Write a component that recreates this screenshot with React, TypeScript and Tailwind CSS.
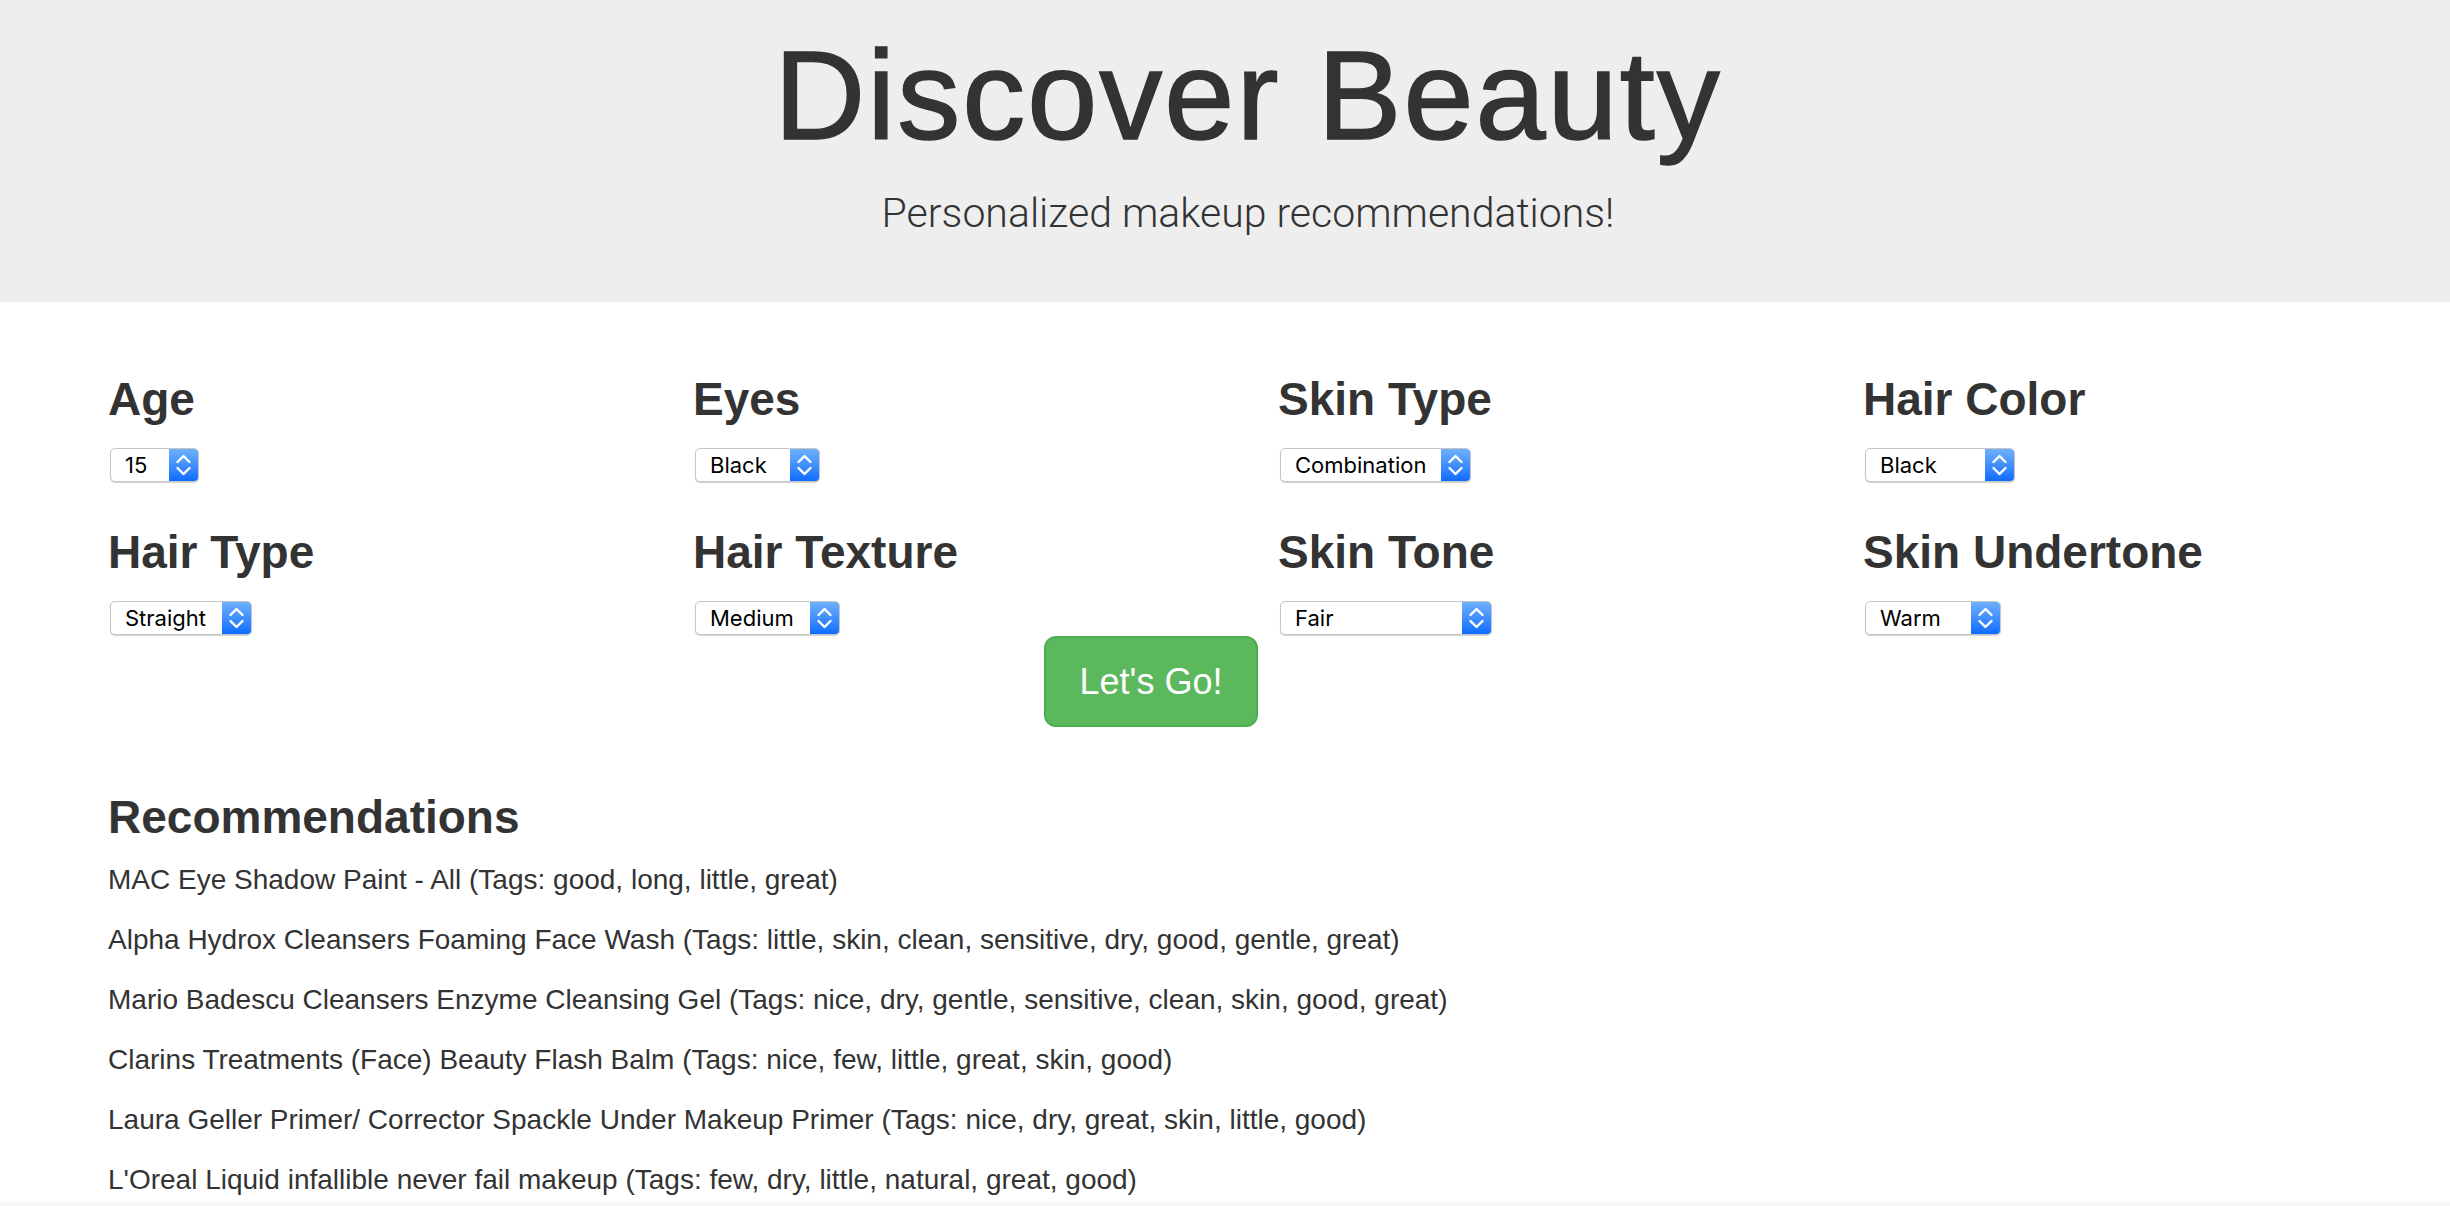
import React from "react";

type Field = { label: string; value: string; width: number };

const row1: Field[] = [
  { label: "Age", value: "15", width: 89 },
  { label: "Eyes", value: "Black", width: 125 },
  { label: "Skin Type", value: "Combination", width: 191 },
  { label: "Hair Color", value: "Black", width: 150 },
];

const row2: Field[] = [
  { label: "Hair Type", value: "Straight", width: 142 },
  { label: "Hair Texture", value: "Medium", width: 145 },
  { label: "Skin Tone", value: "Fair", width: 212 },
  { label: "Skin Undertone", value: "Warm", width: 136 },
];

const recs = [
  "MAC Eye Shadow Paint - All (Tags: good, long, little, great)",
  "Alpha Hydrox Cleansers Foaming Face Wash (Tags: little, skin, clean, sensitive, dry, good, gentle, great)",
  "Mario Badescu Cleansers Enzyme Cleansing Gel (Tags: nice, dry, gentle, sensitive, clean, skin, good, great)",
  "Clarins Treatments (Face) Beauty Flash Balm (Tags: nice, few, little, great, skin, good)",
  "Laura Geller Primer/ Corrector Spackle Under Makeup Primer (Tags: nice, dry, great, skin, little, good)",
  "L'Oreal Liquid infallible never fail makeup (Tags: few, dry, little, natural, great, good)",
];

function MacSelect({ value, width }: { value: string; width: number }) {
  return (
    <div
      className="ml-[2px] flex h-[34px] overflow-hidden rounded-[5px] border border-[#c6c6c6] bg-white shadow-[0_1px_1px_rgba(0,0,0,0.18)]"
      style={{ width }}
    >
      <span className="flex flex-1 items-center pl-[14px] font-['Inter',sans-serif] text-[22px] leading-none text-black">
        {value}
      </span>
      <span className="flex w-[29px] items-center justify-center bg-linear-to-b from-[#6db0fb] to-[#0a6bff]">
        <svg width="29" height="34" viewBox="0 0 29 34" fill="none">
          <path
            d="M8.5 14 L14.5 8 L20.5 14"
            stroke="white"
            strokeWidth="2.4"
            strokeLinecap="round"
            strokeLinejoin="round"
          />
          <path
            d="M8.5 20 L14.5 26 L20.5 20"
            stroke="white"
            strokeWidth="2.4"
            strokeLinecap="round"
            strokeLinejoin="round"
          />
        </svg>
      </span>
    </div>
  );
}

function FieldCell({ f }: { f: Field }) {
  return (
    <div className="flex flex-col items-start">
      <h3 className="text-[46px] font-bold leading-[53px] text-[#333]">{f.label}</h3>
      <div className="mt-[22px]">
        <MacSelect value={f.value} width={f.width} />
      </div>
    </div>
  );
}

export default function App() {
  return (
    <div className="relative min-h-[1206px] w-[2450px] overflow-hidden bg-white font-['Liberation_Sans',Arial,sans-serif] text-[#333]">
      <header className="flex h-[302px] flex-col items-center bg-[#eeeeee] pl-[46px]">
        <h1 className="mt-[27px] text-[126px] font-normal leading-[138px] tracking-[2px] [-webkit-text-stroke:1.6px_#333]">
          Discover Beauty
        </h1>
        <p className="mt-[18px] font-['Roboto',sans-serif] text-[41px] font-light leading-[60px]">
          Personalized makeup recommendations!
        </p>
      </header>

      <main className="pl-[108px] pt-[71px]">
        <div className="grid grid-cols-[repeat(4,585px)] gap-y-[44px]">
          {row1.map((f) => (
            <FieldCell key={f.label} f={f} />
          ))}
          {row2.map((f) => (
            <FieldCell key={f.label} f={f} />
          ))}
        </div>

        <div className="mt-[1px] flex pl-[936px]">
          <button className="h-[91px] w-[214px] rounded-[12px] border-2 border-[#4cae4c] bg-[#5cb85c] text-[36px] leading-none text-white">
            Let's Go!
          </button>
        </div>

        <h3 className="mt-[64px] text-[46px] font-bold leading-[53px] text-[#333]">
          Recommendations
        </h3>
        <div className="mt-[16px]">
          {recs.map((r) => (
            <p key={r} className="mb-[20px] text-[28px] leading-[40px]">
              {r}
            </p>
          ))}
        </div>
      </main>

      <div className="pointer-events-none absolute bottom-0 left-0 right-0 h-[18px] bg-linear-to-b from-[rgba(238,238,238,0.35)] to-[rgba(232,232,232,0.6)]" />
    </div>
  );
}
